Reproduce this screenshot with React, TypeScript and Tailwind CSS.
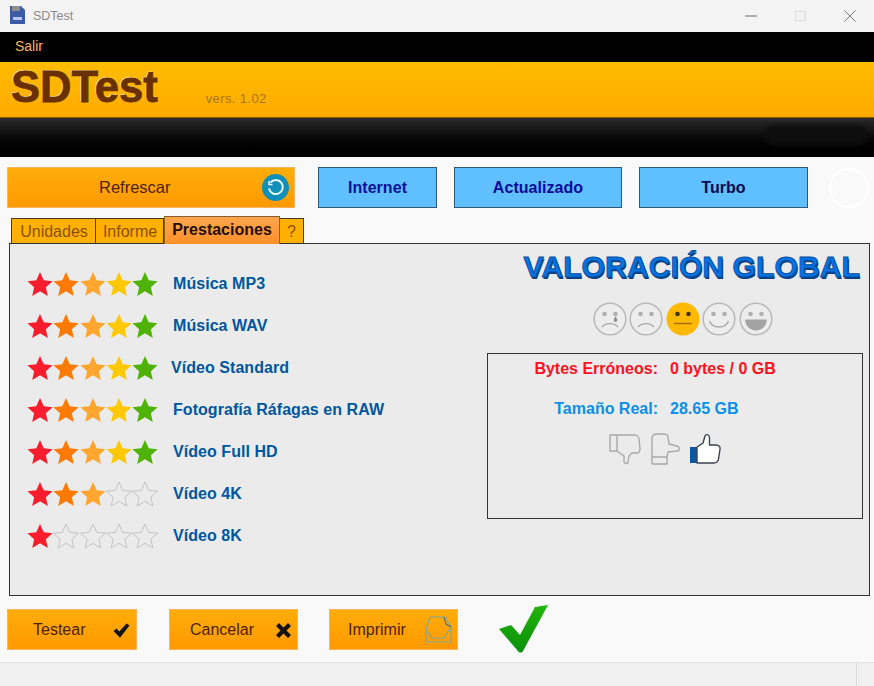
import React from "react";

const STAR = "12,1 15.4,8.6 23.6,9.4 17.4,14.9 19.2,23 12,18.8 4.8,23 6.6,14.9 0.4,9.4 8.6,8.6";
const starColors = ["#fb1c2e", "#ff7a00", "#ffa62e", "#ffc800", "#4fb306"];

const ratings = [
  { label: "Música MP3", stars: 5, shift: "" },
  { label: "Música WAV", stars: 5, shift: "" },
  { label: "Vídeo Standard", stars: 5, shift: "-ml-0.5" },
  { label: "Fotografía Ráfagas en RAW", stars: 5, shift: "" },
  { label: "Vídeo Full HD", stars: 5, shift: "" },
  { label: "Vídeo 4K", stars: 3, shift: "" },
  { label: "Vídeo 8K", stars: 1, shift: "" },
];

function Star({ color }: { color?: string }) {
  return (
    <svg width="26" height="26" viewBox="0 0 24 24" className="shrink-0">
      <polygon
        points={STAR}
        fill={color ?? "none"}
        stroke={color ?? "#bdbdbd"}
        strokeWidth={color ? 0 : 0.8}
      />
    </svg>
  );
}

function Face({ kind }: { kind: "cry" | "sad" | "flat" | "smile" | "laugh" }) {
  const active = kind === "flat";
  const line = active ? "#a06a00" : "#a8a8a8";
  const eye = active ? "#4a3000" : "#b0b0b0";
  return (
    <svg width="34" height="34" viewBox="0 0 34 34" className="shrink-0">
      <circle
        cx="17"
        cy="17"
        r={active ? 16.5 : 15.8}
        fill={active ? "#ffb900" : "#ededed"}
        stroke={active ? "none" : "#b8b8b8"}
        strokeWidth="1.5"
      />
      <circle cx="11.5" cy="12" r="2.3" fill={eye} />
      <circle cx="22.5" cy="12" r="2.3" fill={eye} />
      {kind === "cry" && <path d="M22.5 14.5c1.500 2 1.800 3 1.800 3.800a1.800 1.800 0 0 1-3.600 0c0-.8.3-1.800 1.800-3.800z" fill="#909090" />}
      {(kind === "cry" || kind === "sad") && (
        <path d="M9 25c4-4.500 12-4.500 16 0" fill="none" stroke={line} strokeWidth="1.4" />
      )}
      {kind === "flat" && <path d="M8 21.500h18" stroke={line} strokeWidth="1.4" />}
      {kind === "smile" && <path d="M7.500 19c3 8 16 8 19 0" fill="none" stroke={line} strokeWidth="1.4" />}
      {kind === "laugh" && <path d="M6 17.500h22c-.5 7-5.500 11-11 11s-10.500-4-11-11z" fill="#a3a3a3" />}
    </svg>
  );
}

function ThumbDown() {
  return (
    <svg width="32" height="32" viewBox="0 0 32 32" fill="none" stroke="#a9a9a9" strokeWidth="1.4" strokeLinejoin="round">
      <path d="M1 2h7v16H1z" />
      <path d="M8 2h17c3 0 5 2 5 4l1 10c0 3-2 4-4 4h-4l-3 3-1 6c0 2-3 2-4 0v-6l-7-5" />
    </svg>
  );
}

function ThumbSide() {
  return (
    <svg width="32" height="32" viewBox="0 0 32 32" fill="none" stroke="#a9a9a9" strokeWidth="1.4" strokeLinejoin="round">
      <path d="M3 24h15v7H3z" />
      <path d="M3 24V6c0-3 2-5 5-5h6c3 0 5 1 5 3l1 7 8 2c3 1 3 5 0 5l-9 1-1 5" />
    </svg>
  );
}

function ThumbUp() {
  return (
    <svg width="32" height="32" viewBox="0 0 32 32">
      <rect x="1" y="14" width="7" height="16" fill="#0a56a4" />
      <path
        d="M8 14l6-4 2-7c.5-2 4-2 4.500 1v8h6c3 0 5 1.500 4.500 4l-1.500 10c-.5 3-2 4-4.500 4H8z"
        fill="#ffffff"
        stroke="#3c4450"
        strokeWidth="1.4"
        strokeLinejoin="round"
      />
    </svg>
  );
}

function OrangeButton({ label, icon, className }: { label: string; icon: React.ReactNode; className: string }) {
  return (
    <button className={`flex h-[41px] items-center bg-gradient-to-b from-[#ffad0a] to-[#ff9900] border border-[#ffb45c] pt-[2px] text-[16px] text-[#4d1f00] ${className}`}>
      {label}
      {icon}
    </button>
  );
}

function BlueButton({ label, className }: { label: string; className: string }) {
  return (
    <button className={`h-[41px] border border-[#2d5878] bg-[#60bfff] text-[16px] font-bold tracking-[0.05px] ${className}`}>
      {label}
    </button>
  );
}

export default function App() {
  return (
    <div className="flex h-[686px] w-[874px] flex-col overflow-hidden bg-[#f9f9f9] font-['Liberation_Sans',Arial,sans-serif]">
      {/* title bar */}
      <div className="flex h-[32px] items-center bg-[#f3f3f3] pl-[10px] pr-[18px] text-[#8a8a8a]">
        <svg width="15" height="18" viewBox="0 0 15 18" className="mb-[2px]">
          <path d="M0 0h11l4 4v14H0z" fill="#3c5aa6" />
          <path d="M2 0h8v5H2z" fill="#8f8f8f" />
          <path d="M3 11h9v3H3z" fill="#b9c8ea" />
        </svg>
        <span className="ml-[8px] text-[12.500px]">SDTest</span>
        <div className="ml-auto flex items-center gap-[38px]">
          <span className="h-[2px] w-[12px] bg-[#b0b0b0]" />
          <span className="h-[10px] w-[11px] border border-[#dcdcdc]" />
          <svg width="12" height="12" viewBox="0 0 12 12" stroke="#777" strokeWidth="1">
            <path d="M0.500 0.500l11 11M11.500 0.500l-11 11" />
          </svg>
        </div>
      </div>

      {/* menu */}
      <div className="flex h-[30px] items-center bg-black pb-[2px] pl-[15px] text-[14px] text-[#ffb35c]">Salir</div>

      {/* banner */}
      <div className="flex h-[56px] items-start border-b border-[#8a5a00] bg-gradient-to-b from-[#ffbc00] to-[#ffaa00] pl-[11px]">
        <span className="mt-[1px] text-[43.500px] font-bold leading-[48px] text-[#6b3000] [-webkit-text-stroke:0.8px_#6b3000] [text-shadow:-1px_-1px_0_#ffe6a8]">
          SDTest
        </span>
        <span className="ml-[48px] mt-[27px] text-[13px] tracking-[0.4px] text-[#a8761a]">vers. 1.02</span>
      </div>
      <div className="flex h-[39px] items-center justify-end bg-gradient-to-b from-[#2b2b2b] to-[#000000] pb-[5px] pr-[6px]">
        <div className="h-[20px] w-[104px] rounded-full bg-[#0e0e0e] blur-[2px]" />
      </div>

      {/* action buttons */}
      <div className="flex items-center pl-[7px] pt-[10px]">
        <button className="flex h-[41px] w-[288px] items-center bg-gradient-to-b from-[#ffad0a] to-[#ff9900] border border-[#ffb45c] pl-[91px] pr-[5px] text-[16.500px] text-[#4d1f00]">
          Refrescar
          <span className="ml-auto flex h-[27px] w-[27px] items-center justify-center rounded-full bg-[#108fb8]">
            <svg width="19" height="19" viewBox="0 0 19 19" fill="none" stroke="#eaf8ff" strokeWidth="2">
              <path d="M4.500 4.500a7 7 0 1 1-1.500 6" />
              <path d="M3 3v3.500h3.500" strokeWidth="1.500" />
            </svg>
          </span>
        </button>
        <BlueButton label="Internet" className="ml-[23px] w-[119px] text-[#10109a]" />
        <BlueButton label="Actualizado" className="ml-[17px] w-[168px] text-[#0a0a9a]" />
        <BlueButton label="Turbo" className="ml-[17px] w-[169px] text-[#0a0a50]" />
        <div className="ml-[21px] h-[40px] w-[40px] rounded-full border-2 border-white" />
      </div>

      {/* tabs */}
      <div className="mt-[9px] flex h-[26px] items-end pl-[11px] text-[16px]">
        <div className="flex h-[25px] w-[85px] items-center justify-center border border-[#4a3a20] border-b-0 bg-[#ffb000] pl-[1px] pt-[2px] text-[#8a5000]">Unidades</div>
        <div className="flex h-[25px] w-[68px] items-center justify-center border border-l-0 border-[#4a3a20] border-b-0 bg-[#ffb000] pl-[1px] pt-[2px] text-[#8a5000]">Informe</div>
        <div className="z-10 -mb-[1px] flex h-[28px] w-[116px] items-center justify-center border border-[#8a5a30] border-b-0 bg-gradient-to-b from-[#ffa64d] to-[#ff8f26] pb-[2px] font-bold text-[#1f0f00]">Prestaciones</div>
        <div className="flex h-[25px] w-[24px] items-center justify-center border border-l-0 border-[#4a3a20] border-b-0 bg-[#ffb000] pt-[2px] text-[#8a5000]">?</div>
      </div>

      {/* main panel */}
      <div className="ml-[9px] flex h-[353px] w-[861px] border border-[#333333] bg-[#ebebeb]">
        <div className="w-[477px] pl-[17px] pt-[19px]">
          {ratings.map(r => (
            <div key={r.label} className="flex h-[42px] items-center last:-mt-[0.5px]">
              <div className="flex w-[146px] gap-[0.250px]">
                {starColors.map((c, i) => (
                  <Star key={c} color={i < r.stars ? c : undefined} />
                ))}
              </div>
              <span className={`text-[16px] font-bold tracking-[0.05px] text-[#00579f] ${r.shift}`}>{r.label}</span>
            </div>
          ))}
        </div>

        <div className="flex flex-1 flex-col pr-[6px]">
          <div className="mt-[5px] self-end pr-[3px] text-[30.200px] font-bold leading-[36px] text-[#0075e6] [-webkit-text-stroke:1px_#0a4d9c] [text-shadow:1px_2px_0_#0a3f80]">
            VALORACIÓN GLOBAL
          </div>
          <div className="mt-[17px] flex justify-center gap-[2.500px] pl-[15px]">
            <Face kind="cry" />
            <Face kind="sad" />
            <Face kind="flat" />
            <Face kind="smile" />
            <Face kind="laugh" />
          </div>
          <div className="mt-[17px] flex h-[166px] flex-col border border-[#333333] pt-[6px] text-[16px] font-bold">
            <div className="flex h-[18px] items-center text-[#ff1020]">
              <span className="w-[170px] text-right">Bytes Erróneos:</span>
              <span className="ml-[12px]">0 bytes / 0 GB</span>
            </div>
            <div className="mt-[22px] flex h-[18px] items-center text-[#0a90e8]">
              <span className="w-[170px] text-right">Tamaño Real:</span>
              <span className="ml-[12px]">28.65 GB</span>
            </div>
            <div className="mt-[15px] flex justify-center gap-[8px] pr-[20px]">
              <ThumbDown />
              <ThumbSide />
              <ThumbUp />
            </div>
          </div>
        </div>
      </div>

      {/* bottom buttons */}
      <div className="flex h-[66px] items-center pl-[7px]">
        <OrangeButton
          label="Testear"
          className="w-[130px] pl-[25px] pr-[6px]"
          icon={
            <svg width="17" height="15" viewBox="0 0 17 15" className="ml-auto">
              <path d="M0.500 8l3-2.500 2.800 3L13.500 0.500l3 2L7 14.800z" fill="#141414" />
            </svg>
          }
        />
        <OrangeButton
          label="Cancelar"
          className="ml-[32px] w-[129px] pl-[20px] pr-[5px]"
          icon={
            <svg width="17" height="17" viewBox="0 0 17 17" className="ml-auto">
              <path d="M1 4l3-3 4.500 4.500L13 1l3 3-4.500 4.500L16 13l-3 3-4.500-4.500L4 16l-3-3 4.500-4.500z" fill="#141414" />
            </svg>
          }
        />
        <OrangeButton
          label="Imprimir"
          className="ml-[31px] w-[129px] pl-[18px] pr-[5px]"
          icon={
            <svg width="28" height="28" viewBox="0 0 28 28" fill="none" stroke="#7fa89a" strokeWidth="1.200" className="ml-auto">
              <path d="M2 26V13L6 1h15l6 10v15z" />
              <path d="M20 1l2 7 5 3" stroke="#55707a" />
              <path d="M2 13l6 9h12l7-11" />
            </svg>
          }
        />
        <svg width="50" height="48" viewBox="0 0 50 48" className="ml-[41px]">
          <defs>
            <linearGradient id="check" x1="0" y1="0" x2="0" y2="1">
              <stop offset="0" stopColor="#22b50a" />
              <stop offset="1" stopColor="#0a8f0a" />
            </linearGradient>
          </defs>
          <path d="M0 24l12-4 9 10L36 2l13-2-25 46c-1 2-4 2-5 0z" fill="url(#check)" />
        </svg>
      </div>

      {/* status bar */}
      <div className="flex flex-1 justify-end border-t border-[#e2e2e2] bg-[#f0f0f0] pr-[17px]">
        <div className="w-[1px] bg-[#dddddd]" />
      </div>
    </div>
  );
}
